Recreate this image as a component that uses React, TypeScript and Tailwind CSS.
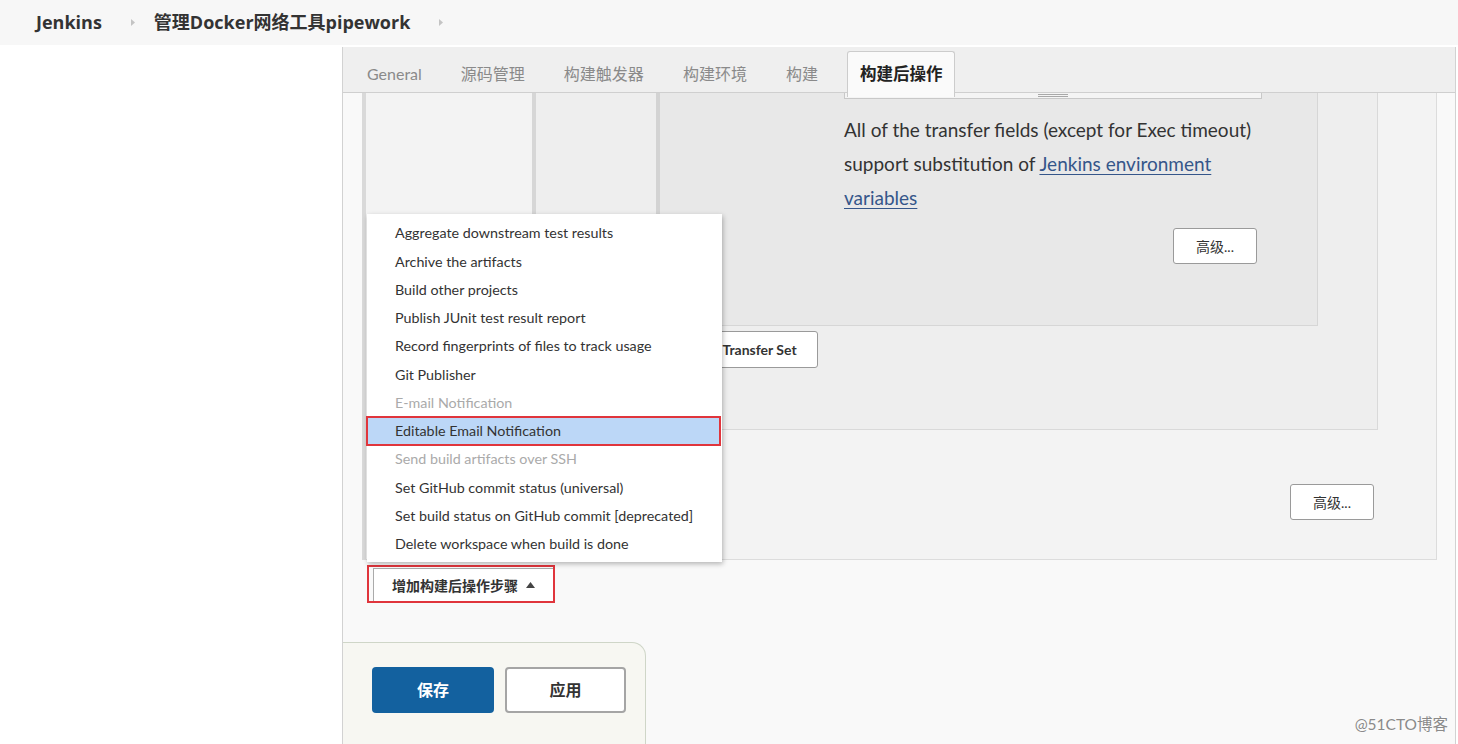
import { memo } from "react";

const menuItems = [
  { label: "Aggregate downstream test results" },
  { label: "Archive the artifacts" },
  { label: "Build other projects" },
  { label: "Publish JUnit test result report" },
  { label: "Record fingerprints of files to track usage" },
  { label: "Git Publisher" },
  { label: "E-mail Notification", disabled: true },
  { label: "Editable Email Notification", active: true },
  { label: "Send build artifacts over SSH", disabled: true },
  { label: "Set GitHub commit status (universal)" },
  { label: "Set build status on GitHub commit [deprecated]" },
  { label: "Delete workspace when build is done" },
];

const Chevron = () => (
  <svg width="6" height="9" viewBox="0 0 6 9" className="shrink-0">
    <path d="M1 1 L5 4.5 L1 8 Z" fill="#c4c4c4" />
  </svg>
);

const App = () => {
  return (
    <div className="w-[1458px] h-[744px] bg-white overflow-hidden relative font-['Lato','Noto_Sans_CJK_SC',sans-serif] text-[#333]">
      {/* breadcrumb */}
      <div className="h-[45px] bg-[#f7f7f7] flex items-center pl-[36px] font-['Open_Sans','Noto_Sans_CJK_SC',sans-serif] font-bold text-[18px] text-[#333]">
        <span>Jenkins</span>
        <span className="ml-[28px] mr-[18px]">
          <Chevron />
        </span>
        <span>管理Docker网络工具pipework</span>
        <span className="ml-[28px]">
          <Chevron />
        </span>
      </div>

      <div className="mt-[2px] flex h-[697px]">
        <div className="w-[342px] bg-white" />

        <div className="w-[1114px] border-l border-r border-[#d2d2d2] bg-[#f9f9f9] flex flex-col">
          {/* tabs */}
          <div className="relative z-20 h-[46px] bg-[#efefef] border-b border-[#cfcfcf] flex items-start pl-[24px] gap-[39px] text-[16px] text-[#8a8a8a]">
            <div className="pt-[15px]">General</div>
            <div className="pt-[15px]">源码管理</div>
            <div className="pt-[15px]">构建触发器</div>
            <div className="pt-[15px]">构建环境</div>
            <div className="pt-[15px]">构建</div>
            <div className="-ml-[10px] mt-[4px] h-[46px] px-[12px] pt-[10px] bg-[#fafafa] border border-b-0 border-[#cccccc] rounded-t-[3px] font-bold text-[16.5px] text-[#222]">
              构建后操作
            </div>
          </div>

          {/* content */}
          <div className="relative flex-1 overflow-hidden">
            {/* box A */}
            <div className="ml-[19px] mr-[18px] bg-[#f3f3f3] border border-t-0 border-[#dcdcdc] border-l-[4px] border-l-[#d9d9d9] pl-[166px] pr-[58px] pb-[39px] flex flex-col">
              {/* box B */}
              <div className="bg-[#eeeeee] border border-t-0 border-[#d9d9d9] border-l-[4px] border-l-[#d6d6d6] pl-[120px] pr-[59px] pb-[61px] flex flex-col">
                {/* box C */}
                <div className="h-[233px] bg-[#e8e8e8] border border-t-0 border-[#d6d6d6] border-l-[4px] border-l-[#d3d3d3] pl-[184px] flex flex-col">
                  <div className="w-[418px] h-[6px] bg-[#f4f4f4] border border-t-0 border-[#c8c8c8] flex justify-center items-end pb-[1px]">
                    <div className="w-[30px] h-[3px] border-t border-b border-[#a8a8a8]" />
                  </div>
                  <div className="w-[413px] mt-[14px] text-[19px] leading-[34px] text-[#333]">
                    <div className="whitespace-nowrap">All of the transfer fields (except for Exec timeout)</div>
                    <div className="whitespace-nowrap">
                      support substitution of{" "}
                      <span className="text-[#35568a] underline underline-offset-[3px]">Jenkins environment</span>
                    </div>
                    <div>
                      <span className="text-[#35568a] underline underline-offset-[3px]">variables</span>
                    </div>
                  </div>
                  <div className="w-[413px] flex justify-end mt-[13px]">
                    <button className="w-[84px] h-[36px] bg-white border border-[#9a9a9a] rounded-[3px] text-[14px] text-[#333]">
                      高级...
                    </button>
                  </div>
                </div>
                <button className="self-start ml-[17px] mt-[5px] h-[37px] px-[20px] bg-white border border-[#9a9a9a] rounded-[3px] text-[14px] font-bold text-[#333]">
                  Add Transfer Set
                </button>
              </div>
              <button className="self-end mr-[4px] mt-[54px] w-[84px] h-[36px] bg-white border border-[#9a9a9a] rounded-[3px] text-[14px] text-[#333]">
                高级...
              </button>
            </div>

            {/* add post-build step */}
            <div className="relative ml-[24px] mt-[5px] w-[188px] h-[38px] border-2 border-[#e0353c] flex items-stretch pl-[4px] pt-[1px]">
              <div className="flex-1 bg-white border-l border-t border-[#aaaaaa] flex items-center pl-[18px] text-[14px] font-bold text-[#333]">
                增加构建后操作步骤
                <svg width="9" height="6" viewBox="0 0 9 6" className="ml-[8px]">
                  <path d="M0 6 L4.5 0 L9 6 Z" fill="#444" />
                </svg>
              </div>
            </div>

            {/* dropdown */}
            <div className="absolute z-30 left-[24px] top-[121px] w-[355px] h-[348px] bg-white shadow-[1px_2px_5px_rgba(0,0,0,0.28)] pt-[5px]">
              {menuItems.map((item) => (
                <div
                  key={item.label}
                  className={
                    "h-[28.25px] flex items-center pl-[28px] text-[14.3px] whitespace-nowrap " +
                    (item.disabled ? "text-[#aaaaaa] " : "text-[#333] ") +
                    (item.active ? "bg-[#bcd7f7] outline-2 outline-[#e0353c] -outline-offset-1 mr-[2px]" : "")
                  }
                >
                  {item.label}
                </div>
              ))}
            </div>
          </div>

          {/* save bar */}
          <div className="h-[102px] w-[303px] bg-[#f7f7f2] border-t border-r border-[#cfd6c8] rounded-tr-[14px] flex items-start gap-[11px] pl-[29px] pt-[24px]">
            <button className="w-[122px] h-[46px] rounded-[4px] bg-[#13619f] text-white font-bold text-[16px]">
              保存
            </button>
            <button className="w-[121px] h-[46px] rounded-[4px] bg-white border-2 border-[#a5a5a5] text-[#333] font-bold text-[16px]">
              应用
            </button>
          </div>
        </div>
      </div>

      <div className="absolute right-[10px] bottom-[8px] text-[15.5px] text-[#8a8a8a] [text-shadow:0_0_2px_#fff]">
        @51CTO博客
      </div>
    </div>
  );
};

export default memo(App);
